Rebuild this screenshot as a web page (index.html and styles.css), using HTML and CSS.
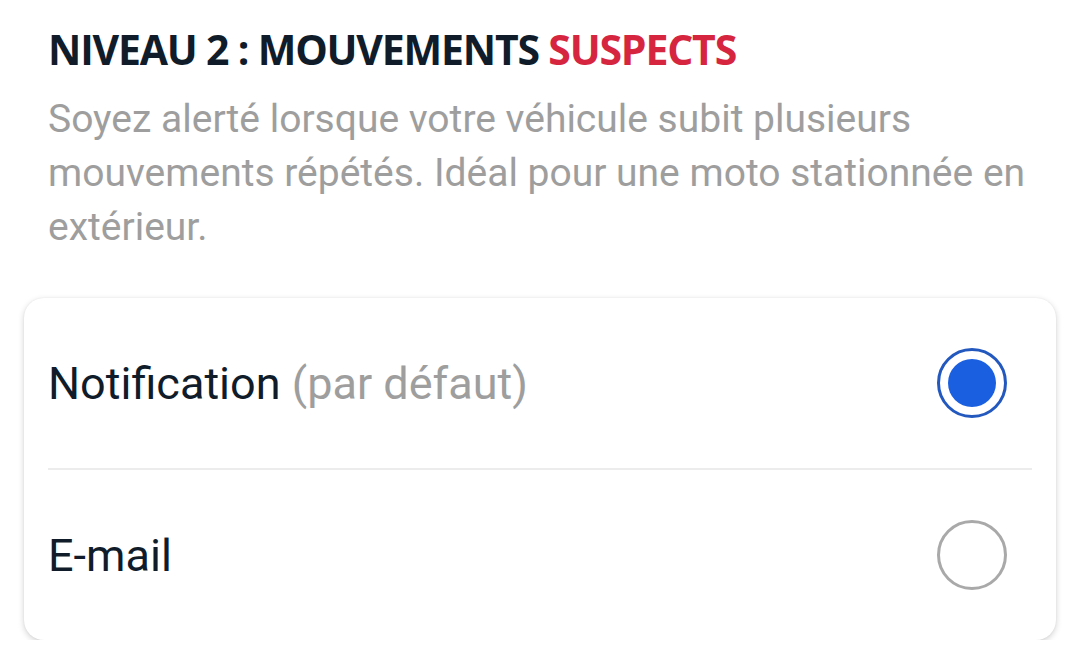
FILE: index.html
```html
<!DOCTYPE html>
<html lang="fr">
<head>
    <meta charset="UTF-8">
    <meta name="viewport" content="width=device-width, initial-scale=1.0">
    <title>Niveau 2 : mouvements suspects</title>
    <link rel="stylesheet" href="styles.css">
</head>
<body>
    <div class="section">
        <div class="title">NIVEAU 2 : MOUVEMENTS <span class="accent">SUSPECTS</span></div>
        <p class="description">Soyez alerté lorsque votre véhicule subit plusieurs mouvements répétés. Idéal pour une moto stationnée en extérieur.</p>

        <div class="card">
            <label class="option">
                <span class="option-label">Notification <span class="hint">(par défaut)</span></span>
                <span class="radio checked"></span>
            </label>
            <label class="option">
                <span class="option-label">E-mail</span>
                <span class="radio"></span>
            </label>
        </div>
    </div>
</body>
</html>
```

FILE: styles.css
```css
:root {
    --text-dark: #111c2a;
    --text-muted: #9e9e9e;
    --accent: #d6263f;
    --brand: #1a5fe0;
    --brand-ring: #2359bf;
    --divider: #ececec;
}

body {
    margin: 0;
    background: #ffffff;
    font-family: Roboto, "Noto Sans", sans-serif;
}

.section {
    padding: 24px 24px 0 24px;
}

.title {
    font-family: "Open Sans", sans-serif;
    font-weight: 700;
    font-size: 41px;
    letter-spacing: -1.2px;
    color: var(--text-dark);
    padding-left: 24px;
    line-height: 50px;
}

.accent {
    color: var(--accent);
}

.description {
    margin: 18px 0 0 0;
    padding: 0 24px;
    font-size: 39px;
    line-height: 54px;
    color: var(--text-muted);
}

.card {
    margin-top: 44px;
    background: #fff;
    border-radius: 20px;
    box-shadow: 0 2px 6px rgba(0, 0, 0, 0.18), 0 0 2px rgba(0, 0, 0, 0.06);
    padding: 0 24px;
}

.option {
    display: flex;
    align-items: center;
    justify-content: space-between;
    height: 170px;
}

.option + .option {
    border-top: 2px solid var(--divider);
}

.option-label {
    font-size: 45px;
    color: var(--text-dark);
}

.hint {
    color: var(--text-muted);
}

.radio {
    width: 64px;
    height: 64px;
    border: 3px solid #a9a9a9;
    border-radius: 50%;
    margin-right: 25px;
    box-sizing: content-box;
    position: relative;
}

.radio.checked {
    border-color: var(--brand-ring);
}

.radio.checked::after {
    content: "";
    position: absolute;
    inset: 8px;
    border-radius: 50%;
    background: var(--brand);
}
```
